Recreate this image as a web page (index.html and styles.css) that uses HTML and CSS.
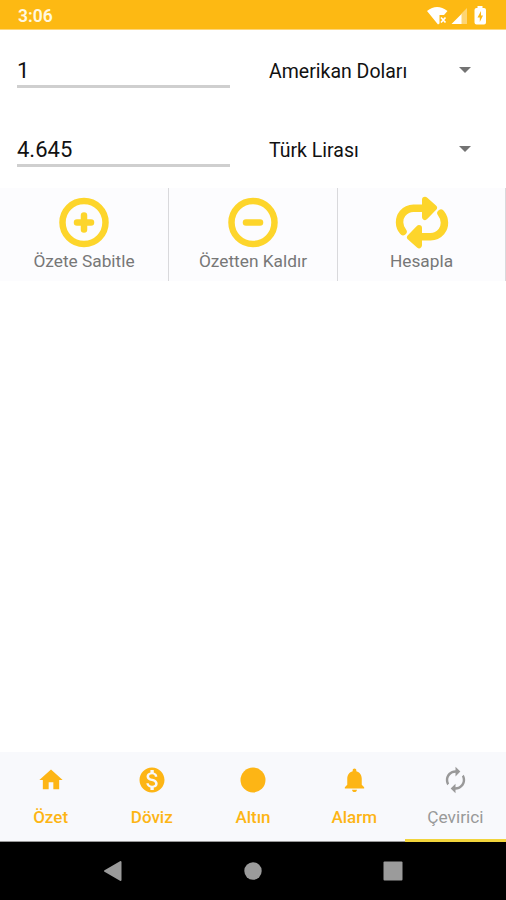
FILE: index.html
```html
<!DOCTYPE html>
<html lang="tr">
<head>
    <meta charset="UTF-8">
    <meta name="viewport" content="width=device-width, initial-scale=1.0">
    <title>Çevirici</title>
    <link rel="stylesheet" href="styles.css">
</head>
<body>
    <header class="status-bar">
        <span class="clock">3:06</span>
        <svg class="status-icons" width="60" height="20" viewBox="0 0 60 20">
            <path fill="#fff" d="M0 5Q10 -3 20.500 5L17 9H12.500V17.500L11 18.500Z"/>
            <path stroke="#fff" stroke-width="1.700" d="M14 11.500L18.500 16.500M18.500 11.500L14 16.500"/>
            <path fill="#fff" fill-opacity=".4" d="M34 8L40 2V18H34Z"/>
            <path fill="#fff" d="M24.500 18L34.500 8V18Z"/>
            <path fill="#fff" d="M50.500 0H55.500V2H57Q59 2 59 4V16.500Q59 18.500 57 18.500H49.500Q47.500 18.500 47.500 16.500V4Q47.500 2 49.500 2H50.500Z"/>
            <path fill="#fdb913" d="M54 5L50.500 11.500H52.800V16L56 9.500H54Z"/>
        </svg>
    </header>

    <main>
        <div class="row">
            <input class="amount" type="text" value="1">
            <div class="currency"><span>Amerikan Doları</span><i class="caret"></i></div>
        </div>
        <div class="row">
            <input class="amount" type="text" value="4.645">
            <div class="currency"><span>Türk Lirası</span><i class="caret"></i></div>
        </div>

        <div class="actions">
            <div class="action">
                <svg width="54" height="54" viewBox="0 0 54 54">
                    <circle cx="27" cy="26.500" r="21.500"/>
                    <path d="M27 19.500V33.500M20 26.500H34"/>
                </svg>
                <span>Özete Sabitle</span>
            </div>
            <div class="action">
                <svg width="54" height="54" viewBox="0 0 54 54">
                    <circle cx="27" cy="26.500" r="21.500"/>
                    <path d="M20 26.500H34"/>
                </svg>
                <span>Özetten Kaldır</span>
            </div>
            <div class="action">
                <svg width="54" height="54" viewBox="0 0 54 54">
                    <path class="thick" d="M8 35.500C3.500 30 3.500 22.500 7.500 17.500C10.500 14 14 12.300 18.500 12.300H31M46 17.300C50.500 23 50.500 30.500 46.500 35.500C43.500 39 40 40.700 35.500 40.700H23"/>
                    <path class="head" d="M30 3.700L39 11.700L30 21ZM24 32L15 41.300L24 49.300Z"/>
                </svg>
                <span>Hesapla</span>
            </div>
        </div>
    </main>

    <nav class="tabs">
        <a class="tab">
            <svg width="28" height="28" viewBox="0 0 24 24"><path d="M10 20v-6h4v6h5v-8h3L12 3 2 12h3v8z"/></svg>
            <span>Özet</span>
        </a>
        <a class="tab">
            <svg width="30" height="30" viewBox="0 0 24 24"><path d="M12 2C6.480 2 2 6.480 2 12s4.480 10 10 10 10-4.480 10-10S17.520 2 12 2zm1.410 16.090V20h-2.670v-1.930c-1.710-.36-3.160-1.460-3.270-3.400h1.960c.1 1.050.82 1.870 2.650 1.870 1.960 0 2.400-.98 2.400-1.590 0-.83-.44-1.610-2.670-2.140-2.480-.6-4.180-1.620-4.180-3.670 0-1.720 1.390-2.840 3.110-3.210V4h2.670v1.950c1.860.45 2.790 1.860 2.850 3.390H14.300c-.05-1.110-.64-1.870-2.220-1.870-1.500 0-2.400.68-2.400 1.640 0 .84.65 1.390 2.670 1.910s4.180 1.390 4.180 3.910c-.01 1.830-1.380 2.830-3.120 3.160z"/></svg>
            <span>Döviz</span>
        </a>
        <a class="tab">
            <svg width="30" height="30" viewBox="0 0 24 24"><circle cx="12" cy="12" r="10"/></svg>
            <span>Altın</span>
        </a>
        <a class="tab">
            <svg width="29" height="29" viewBox="0 0 24 24"><path d="M12 22c1.100 0 2-.9 2-2h-4c0 1.100.89 2 2 2zm6-6v-5c0-3.070-1.640-5.640-4.500-6.320V4c0-.83-.67-1.500-1.500-1.500s-1.500.67-1.500 1.500v.68C7.630 5.360 6 7.920 6 11v5l-2 2v1h16v-1l-2-2z"/></svg>
            <span>Alarm</span>
        </a>
        <a class="tab active">
            <svg width="29" height="29" viewBox="0 0 24 24"><path d="M12 6v3l4-4-4-4v3c-4.420 0-8 3.580-8 8 0 1.570.46 3.030 1.240 4.260L6.700 14.800c-.45-.83-.7-1.790-.7-2.800 0-3.310 2.690-6 6-6zm6.760 1.740L17.300 9.200c.44.84.7 1.790.7 2.800 0 3.310-2.690 6-6 6v-3l-4 4 4 4v-3c4.420 0 8-3.580 8-8 0-1.570-.46-3.030-1.240-4.260z"/></svg>
            <span>Çevirici</span>
        </a>
    </nav>

    <footer class="system-nav">
        <svg width="20" height="22" viewBox="0 0 20 22"><path d="M17.500 2V20L2 11Z" stroke="#9b9b9b" stroke-width="2" stroke-linejoin="round"/></svg>
        <svg width="20" height="20" viewBox="0 0 20 20"><circle cx="10" cy="10" r="8.700"/></svg>
        <svg width="20" height="20" viewBox="0 0 20 20"><rect x=".5" y=".5" width="19" height="19" rx="1"/></svg>
    </footer>
</body>
</html>
```

FILE: styles.css
```css
* {
    box-sizing: border-box;
}
body {
    font-family: Roboto, "Liberation Sans", sans-serif;
    background-color: #fff;
    color: #111;
    margin: 0;
    height: 900px;
    display: flex;
    flex-direction: column;
    overflow: hidden;
}
.status-bar {
    background-color: #fdb913;
    height: 30px;
    padding: 2px 19px 0 18px;
    display: flex;
    align-items: center;
    justify-content: space-between;
    border-bottom: 1px solid #fed67a;
}
.clock {
    color: #fff8e0;
    font-size: 17.5px;
    font-weight: 600;
}
main {
    flex: 1;
}
.row {
    height: 79px;
    padding: 22px 35px 0 17px;
    display: flex;
}
.amount {
    width: 213px;
    height: 36px;
    margin-right: 39px;
    padding: 3px 0 0;
    border: none;
    border-bottom: 3px solid #cfcfcf;
    background: none;
    color: #111;
    font-family: inherit;
    font-size: 22px;
    outline: none;
}
.currency {
    flex: 1;
    height: 39px;
    display: flex;
    align-items: center;
    justify-content: space-between;
    font-size: 19.5px;
}
.caret {
    margin-bottom: 3px;
    border: 6px solid transparent;
    border-top-color: #737373;
    border-bottom: none;
}
.actions {
    display: grid;
    grid-template-columns: 169px 169px 168px;
    height: 93px;
    background-color: #fcfcfe;
}
.action {
    display: flex;
    flex-direction: column;
    align-items: center;
    gap: 1px;
    padding-top: 8px;
    border-right: 1px solid #d9d9dc;
    color: #777;
    font-size: 17.3px;
}
.action svg {
    fill: none;
    stroke: #fdd52b;
    stroke-width: 6.5;
    stroke-linecap: round;
    stroke-linejoin: round;
}
.action svg .thick {
    stroke-width: 7.5;
}
.action svg .head {
    fill: #fdd52b;
    stroke-width: 6;
}
.tabs {
    display: grid;
    grid-template-columns: repeat(5, 1fr);
    height: 90px;
    background-color: #f8f9fc;
}
.tab {
    display: flex;
    flex-direction: column;
    align-items: center;
    padding-top: 13px;
    border-bottom: 1px solid #999;
    color: #fdb515;
    fill: #fdb515;
    font-size: 17px;
    font-weight: 500;
}
.tab svg {
    height: 30px;
    margin-bottom: 12px;
}
.tab.active {
    color: #999;
    fill: #999;
    font-size: 17.3px;
    font-weight: 400;
    border-bottom: 3px solid #f1d43c;
}
.system-nav {
    height: 58px;
    background-color: #000;
    display: flex;
    align-items: center;
    justify-content: space-between;
    padding: 0 103px;
    fill: #9b9b9b;
}
```
